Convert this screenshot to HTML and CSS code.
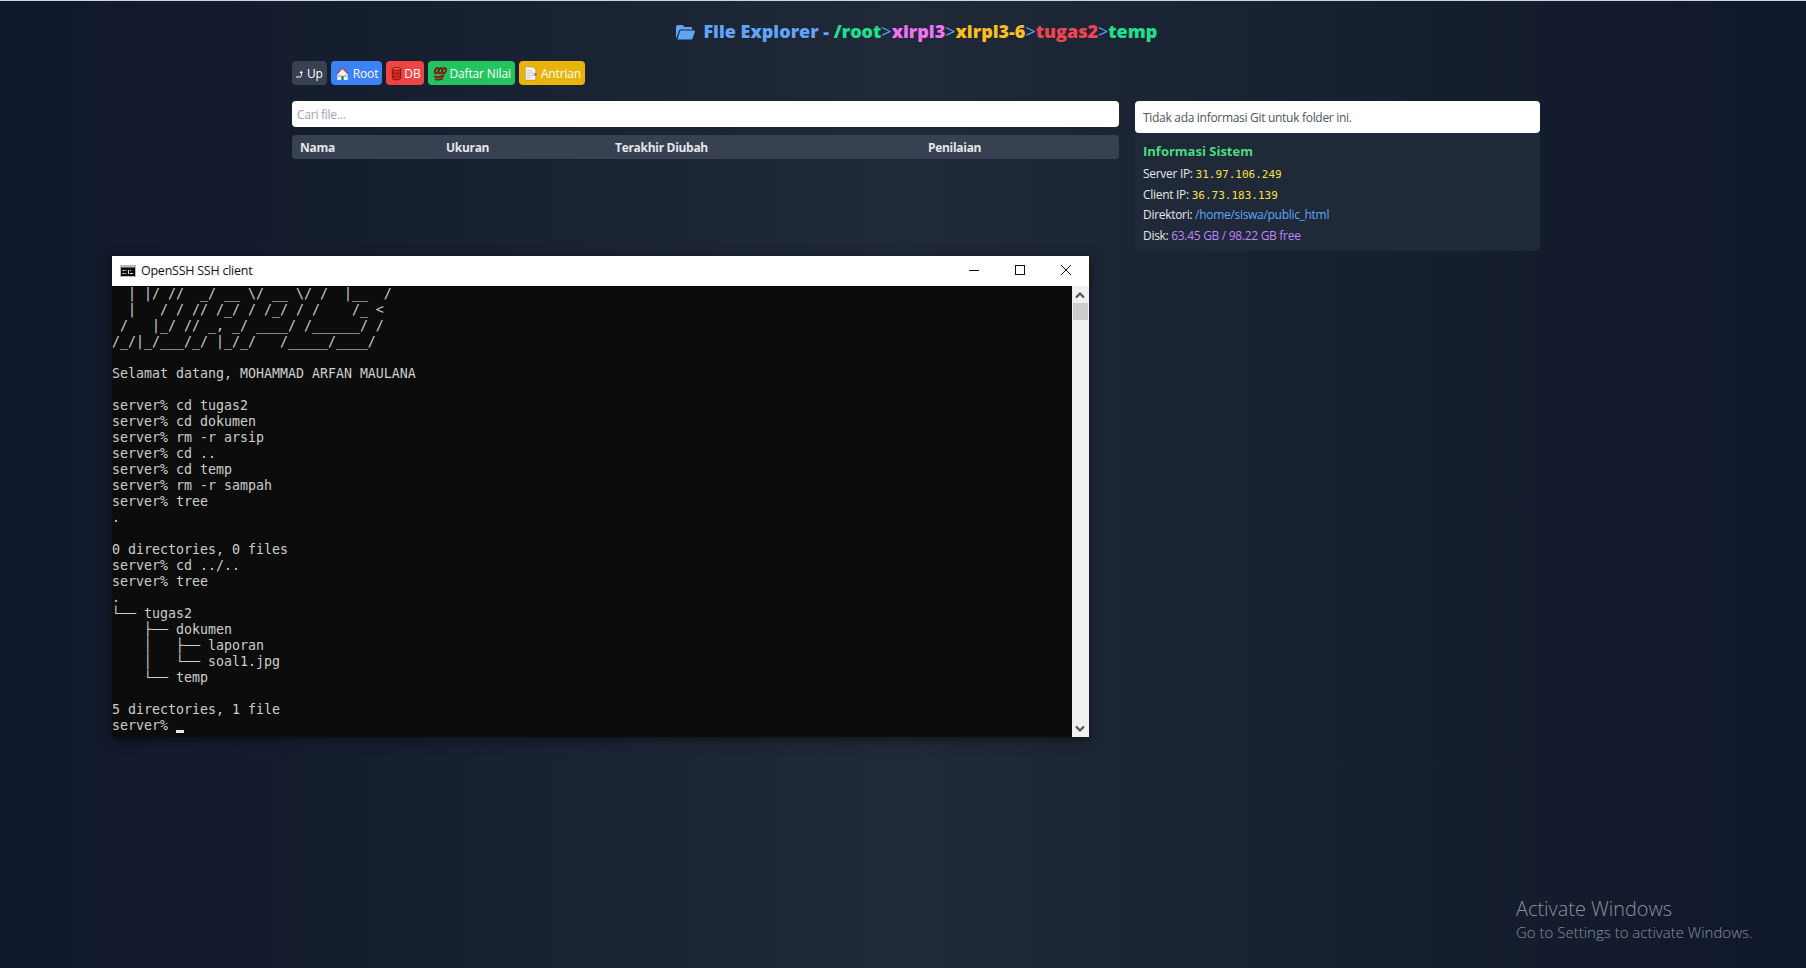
FILE: index.html
```html
<!DOCTYPE html>
<html lang="en">
<head>
    <meta charset="UTF-8">
    <title>File Explorer</title>
    <link rel="stylesheet" href="styles.css">
</head>
<body>
<div class="page">
    <h1 class="title">
        <svg class="title-icon" viewBox="0 0 20 16"><path d="M1 3C1 2 1.800 1 3 1h4.500l2 2H15.500c1 0 1.800.7 1.800 1.700V5.500H6C5 5.500 4.200 6 3.900 7L1.500 14C1.200 13.700 1 13.300 1 13z" fill="#60a5fa"/><path d="M5.200 6.500H19c.7 0 1.100.6.900 1.200l-2.400 7c-.2.500-.6.800-1.100.8H2.400z" fill="#60a5fa"/></svg>
        File Explorer - <a class="crumb c-green">/root</a><span>&gt;</span><a class="crumb c-pink">xirpl3</a><span>&gt;</span><a class="crumb c-yellow">xirpl3-6</a><span>&gt;</span><a class="crumb c-red">tugas2</a><span>&gt;</span><a class="crumb c-green">temp</a>
    </h1>

    <div class="toolbar">
        <a class="btn btn-gray">
            <svg class="up-arrow" viewBox="0 0 8 8"><path d="M0 7h4c1 0 1.300-.6 1.300-1.500V2.500" fill="none" stroke="#fff" stroke-width="1"/><path d="M3.500 3 5.300 .8 7 3z" fill="#fff"/></svg>
            Up</a>
        <a class="btn btn-blue">
            <svg class="btn-icon" viewBox="0 0 16 16"><path d="M8 1.500 2.500 7.500V15h11V7.500z" fill="#f1f3f4"/><path d="M8 1 1.500 8l1 1L8 3.200 13.500 9l1-1z" fill="#a8474a"/><rect x="6.700" y="10.500" width="2.600" height="4.500" fill="#2f7d5b"/><rect x="3.800" y="9.500" width="2" height="2" fill="#5aa5e0"/><rect x="10.200" y="9.500" width="2" height="2" fill="#5aa5e0"/></svg>
            Root</a>
        <a class="btn btn-red btn-tight">
            <svg class="btn-icon" viewBox="0 0 16 16"><path d="M3.500 3v10c0 1.100 2 1.800 4.500 1.800s4.500-.7 4.500-1.800V3z" fill="#d8261a" stroke="#4a0f0a" stroke-width=".7"/><ellipse cx="8" cy="3" rx="4.500" ry="1.600" fill="#ee5a4e" stroke="#4a0f0a" stroke-width=".7"/><path d="M3.500 6.500c0 1 2 1.600 4.500 1.600s4.500-.6 4.500-1.600M3.500 10c0 1 2 1.600 4.500 1.600s4.500-.6 4.500-1.600" fill="none" stroke="#7a1a12" stroke-width=".6"/></svg>DB</a>
        <a class="btn btn-green">
            <svg class="btn-icon" viewBox="0 0 16 16"><g fill="none" stroke="#7f1d12" stroke-width="2"><ellipse cx="5" cy="5" rx="1.800" ry="3" transform="rotate(20 5 5)"/><ellipse cx="9" cy="5" rx="1.800" ry="3" transform="rotate(20 9 5)"/><ellipse cx="13" cy="5" rx="1.800" ry="3" transform="rotate(20 13 5)"/></g><path d="M2 11c3 1.500 7 1 11-1M3 14c3 1 6 .5 9-1" fill="none" stroke="#7f1d12" stroke-width="1.800"/></svg>
            Daftar Nilai</a>
        <a class="btn btn-amber">
            <svg class="btn-icon" viewBox="0 0 16 16"><path d="M2.500 1h8l3 3v11h-11z" fill="#f4f4f4" stroke="#8a8a8a" stroke-width=".5"/><path d="M4 5h6M4 7.500h8M4 10h8M4 12.500h5" stroke="#b5b5b5" stroke-width=".8"/><circle cx="13.300" cy="9" r="1.300" fill="#d6336c"/></svg>
            Antrian</a>
    </div>

    <div class="columns">
        <div class="main-col">
            <input class="search" type="text" placeholder="Cari file...">
            <div class="file-head">
                <div>Nama</div>
                <div>Ukuran</div>
                <div>Terakhir Diubah</div>
                <div>Penilaian</div>
            </div>
        </div>
        <div class="side-col">
            <div class="git-box">Tidak ada informasi Git untuk folder ini.</div>
            <div class="sys-box">
                <h3>Informasi Sistem</h3>
                <p>Server IP: <code class="val-yellow">31.97.106.249</code></p>
                <p>Client IP: <code class="val-yellow">36.73.183.139</code></p>
                <p>Direktori: <span class="val-blue">/home/siswa/public_html</span></p>
                <p>Disk: <span class="val-purple">63.45 GB / 98.22 GB free</span></p>
            </div>
        </div>
    </div>
</div>

<!-- terminal window lying over the page -->
<div class="term-window">
    <div class="term-title">
        <svg class="term-icon" viewBox="0 0 16 12"><rect width="16" height="12" fill="#b9b9b9"/><rect x="1" y="2.500" width="14" height="8.500" fill="#0c0c0c"/><path d="M2.500 5h2v1h-2zM2.500 8h2v1h-2zM5.500 5h1v1h-1zM5.500 8h1v1h-1zM8 5h1v4H8zM10 5h1v1h-1zM10 8h3v1h-3z" fill="#e0e0e0"/></svg>
        <span class="term-name">OpenSSH SSH client</span>
        <div class="term-controls">
            <svg viewBox="0 0 10 10"><path d="M0 5.500h10" stroke="#111" stroke-width="1"/></svg>
            <svg viewBox="0 0 10 10"><rect x=".5" y=".5" width="9" height="9" fill="none" stroke="#111"/></svg>
            <svg viewBox="0 0 10 10"><path d="M0 0l10 10M10 0 0 10" stroke="#111" stroke-width="1"/></svg>
        </div>
    </div>
    <div class="term-body">
<pre class="term-text">  | |/ //  _/ __ \/ __ \/ /  |__  /
  |   / / // /_/ / /_/ / /    /_ &lt;
 /   |_/ // _, _/ ____/ /______/ /
/_/|_/___/_/ |_/_/   /_____/____/

Selamat datang, MOHAMMAD ARFAN MAULANA

server% cd tugas2
server% cd dokumen
server% rm -r arsip
server% cd ..
server% cd temp
server% rm -r sampah
server% tree
.

0 directories, 0 files
server% cd ../..
server% tree
.
└── tugas2
    ├── dokumen
    │   ├── laporan
    │   └── soal1.jpg
    └── temp

5 directories, 1 file
server% <span class="cursor"></span></pre>
        <div class="term-scroll">
            <svg class="scroll-arrow" viewBox="0 0 16 16"><path d="M4 11l4-4 4 4" fill="none" stroke="#505050" stroke-width="2.200"/></svg>
            <div class="scroll-thumb"></div>
            <svg class="scroll-arrow scroll-down" viewBox="0 0 16 16"><path d="M4 6l4 4 4-4" fill="none" stroke="#505050" stroke-width="2.200"/></svg>
        </div>
    </div>
</div>

<div class="activate">
    <div class="activate-head">Activate Windows</div>
    <div>Go to Settings to activate Windows.</div>
</div>
</body>
</html>
```

FILE: styles.css
```css
/* page */
html, body {
    margin: 0;
    height: 100%;
}
body {
    font-family: "Open Sans", "Noto Sans", sans-serif;
    background: linear-gradient(90deg, #0f172a, #1f2937, #0f172a);
    box-shadow: inset 0 1px 0 #cbd5e1;
    overflow: hidden;
    color: #e5e7eb;
}
.page {
    padding: 1px 266px 0 292px;
}

/* title */
.title {
    margin: 0;
    padding-top: 19px;
    height: 40px;
    box-sizing: border-box;
    text-align: center;
    font-size: 18px;
    line-height: 22px;
    font-weight: 800;
    color: #60a5fa;
    white-space: nowrap;
}
.title-icon {
    width: 20px;
    height: 16px;
    vertical-align: -2px;
    margin-right: 4px;
}
.title span {
    color: #60a5fa;
    font-weight: 400;
}
.c-green { color: #1fe08f; }
.c-pink { color: #f472f6; }
.c-yellow { color: #fbbf24; }
.c-red { color: #f04452; }

/* buttons */
.toolbar {
    display: flex;
    gap: 4px;
    margin-top: 20px;
}
.btn {
    display: flex;
    align-items: center;
    gap: 3px;
    height: 24px;
    padding: 0 4px;
    border-radius: 4px;
    font-size: 12px;
    letter-spacing: -0.15px;
    color: #fff;
}
.btn-tight { gap: 0; padding: 0 3px; }
.btn-icon {
    width: 15px;
    height: 15px;
}
.up-arrow {
    width: 8px;
    height: 8px;
    margin-top: 2px;
}
.btn-gray { background: #374151; }
.btn-blue { background: #3b82f6; }
.btn-red { background: #ef4444; }
.btn-green { background: #22c55e; }
.btn-amber { background: #eab308; }

/* two columns */
.columns {
    display: flex;
    gap: 16px;
    margin-top: 16px;
}
.main-col {
    width: 827px;
}
.side-col {
    flex: 1;
}
.search {
    display: block;
    width: 100%;
    height: 26px;
    box-sizing: border-box;
    border: none;
    border-radius: 4px;
    padding: 0 5px;
    background: #fff;
    font-family: inherit;
    font-size: 12px;
    letter-spacing: -0.25px;
}
.search::placeholder {
    color: #9ca3af;
}
.file-head {
    display: grid;
    grid-template-columns: 146px 169px 313px 1fr;
    height: 24px;
    margin-top: 8px;
    background: #374151;
    border-radius: 4px;
    font-size: 12px;
    letter-spacing: -0.3px;
    font-weight: 700;
    line-height: 25px;
    color: #e5e7eb;
}
.file-head div {
    padding-left: 8px;
}

/* git and system info */
.git-box {
    height: 32px;
    box-sizing: border-box;
    padding-left: 8px;
    background: #fff;
    border-radius: 4px;
    font-size: 12px;
    letter-spacing: -0.3px;
    line-height: 33px;
    color: #4b5563;
}
.sys-box {
    height: 118px;
    box-sizing: border-box;
    padding: 9px 8px 0;
    background: #1f2937;
    border-radius: 0 0 4px 4px;
    font-size: 12px;
    letter-spacing: -0.3px;
    color: #e5e7eb;
}
.sys-box h3 {
    margin: 0 0 4px;
    font-size: 13px;
    letter-spacing: 0;
    line-height: 18px;
    font-weight: 700;
    color: #4ade80;
}
.sys-box p {
    margin: 0;
    line-height: 20.500px;
}
.sys-box code {
    font-family: "DejaVu Sans Mono", monospace;
    font-size: 11px;
    line-height: 1;
    letter-spacing: 0;
}
.val-yellow { color: #fde047; }
.val-blue { color: #60a5fa; }
.val-purple { color: #c084fc; }

/* terminal window */
.term-window {
    position: absolute;
    left: 112px;
    top: 256px;
    width: 977px;
    height: 481px;
    display: flex;
    flex-direction: column;
    background: #0c0c0c;
    box-shadow: 0 2px 10px rgba(0, 0, 0, 0.5);
}
.term-title {
    display: flex;
    align-items: center;
    height: 30px;
    padding-left: 8px;
    background: #fff;
    flex-shrink: 0;
}
.term-icon {
    width: 16px;
    height: 12px;
    margin-right: 5px;
}
.term-name {
    font-size: 12.500px;
    letter-spacing: -0.25px;
    line-height: 28px;
    color: #111;
}
.term-controls {
    margin-left: auto;
    margin-bottom: 2px;
    display: flex;
    gap: 36px;
    padding-right: 18px;
}
.term-controls svg {
    width: 10px;
    height: 10px;
}
.term-body {
    flex: 1;
    display: flex;
    min-height: 0;
}
.term-text {
    flex: 1;
    margin: 0;
    font-family: "DejaVu Sans Mono", monospace;
    font-size: 13.290px;
    line-height: 16px;
    color: #cccccc;
}
.cursor {
    display: inline-block;
    width: 8px;
    height: 3px;
    background: #e8e8e8;
    vertical-align: -3px;
}
.term-scroll {
    position: relative;
    width: 17px;
    background: #f0f0f0;
}
.scroll-arrow {
    display: block;
    width: 16px;
    height: 17px;
}
.scroll-down {
    position: absolute;
    bottom: 0;
}
.scroll-thumb {
    width: 15px;
    height: 17px;
    margin-left: 1px;
    background: #cdcdcd;
}

/* watermark */
.activate {
    position: absolute;
    left: 1516px;
    top: 895px;
    font-size: 15px;
    line-height: 20px;
    font-weight: 300;
    color: #8a909b;
}
.activate-head {
    font-size: 19.900px;
    line-height: 27px;
}
```
